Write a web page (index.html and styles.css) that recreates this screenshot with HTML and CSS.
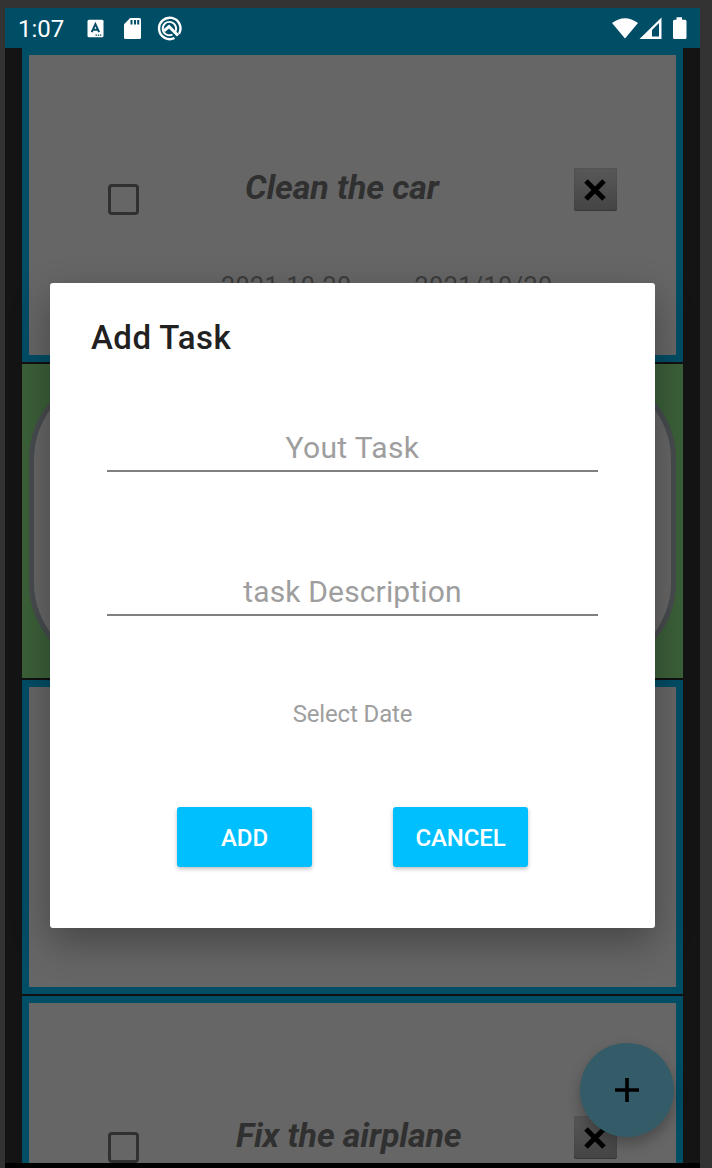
FILE: index.html
```html
<!DOCTYPE html>
<html lang="en">
<head>
<meta charset="utf-8">
<title>Add Task</title>
<link rel="stylesheet" href="styles.css">
</head>
<body>
<div class="phone">
  <header class="status">
    <span class="clock">1:07</span>
    <svg class="status-left" width="100" height="28" viewBox="0 0 100 28">
      <rect x="5.5" y="5.700" width="16" height="17.500" rx="1.5" fill="#fff"/>
      <path d="M9.7 18.2 13.4 10.2 17.1 18.2M11 15.700h4.8" fill="none" stroke="#004d66" stroke-width="2"/>
      <path d="M13.5 21.1h6" stroke="#004d66" stroke-width="1.2" stroke-dasharray="1.4 .8"/>
      <path d="M48.2 4H57.5Q59 4 59 5.500V23.500Q59 25 57.500 25H43.500Q42 25 42 23.500V10.300Z" fill="#fff"/>
      <path d="M49.500 6v4.500M53 6v4.500M56.200 6v4.500" stroke="#004d66" stroke-width="2"/>
      <path d="M97 19.800A10.700 10.700 0 1 0 92.500 24" fill="none" stroke="#fff" stroke-width="2.400"/>
      <path d="M92.800 18.500A6.700 6.700 0 1 0 90.500 20.500" fill="none" stroke="#fff" stroke-width="1.900"/>
      <path d="M82 16.800 87 12.500 96 21.500" fill="none" stroke="#fff" stroke-width="3"/>
    </svg>
    <svg class="status-right" width="78" height="28" viewBox="0 0 78 28">
      <path d="M0 9Q13-.500 26 9L13 24.500Z" fill="#fff"/>
      <path d="M27.500 25 49.500 3.500V25Z" fill="#fff"/>
      <path d="M40 16 47 9V22.500H40Z" fill="#004d66"/>
      <path d="M64.500 3.300h5.500v2.500h3q1.500 0 1.500 1.500V23.500Q74.500 25 73 25H62.500Q61 25 61 23.500V7.300Q61 5.800 62.500 5.800h2Z" fill="#fff"/>
    </svg>
  </header>

  <main class="list">
    <article class="card">
      <div class="row">
        <span class="check"></span>
        <h2 class="name name-car">Clean the car</h2>
        <button class="delete"><svg width="22" height="22" viewBox="0 0 22 22"><path d="M2 2 20 20M20 2 2 20"/></svg></button>
      </div>
      <div class="dates"><span>2021-10-20</span><span>2021/10/20</span></div>
    </article>
    <article class="card card-done"><div class="pill"></div></article>
    <article class="card"></article>
    <article class="card">
      <div class="row">
        <span class="check"></span>
        <h2 class="name name-plane">Fix the airplane</h2>
        <button class="delete"><svg width="22" height="22" viewBox="0 0 22 22"><path d="M2 2 20 20M20 2 2 20"/></svg></button>
      </div>
    </article>
  </main>
  <button class="fab"><svg width="24" height="24" viewBox="0 0 24 24"><path d="M12 0V24M0 12H24"/></svg></button>
  <footer class="nav"></footer>

  <section class="dialog">
    <h1 class="dialog-title">Add Task</h1>
    <div class="field"><span class="hint">Yout Task</span></div>
    <div class="field"><span class="hint hint-desc">task Description</span></div>
    <div class="date"><span class="date-text">Select Date</span></div>
    <div class="actions">
      <button class="action">ADD</button>
      <button class="action">CANCEL</button>
    </div>
  </section>
</div>
</body>
</html>
```
FILE: styles.css
```css
* { box-sizing: border-box; }
body { margin: 0; height: 1168px; padding: 8px 12px 0 5px; background: #333; font-family: Roboto, sans-serif; overflow: hidden; }
h1, h2 { margin: 0; }
button { border: 0; padding: 0; font-family: inherit; }
svg { display: block; }
.phone { position: relative; display: flex; flex-direction: column; width: 695px; height: 1160px; background: #141414; overflow: hidden; }
.status { display: flex; align-items: flex-start; height: 40px; flex: none; padding-left: 13px; background: #004d66; color: #fff; }
.clock { width: 64px; font-size: 24px; line-height: 42px; white-space: nowrap; }
.status-left { margin-top: 6px; }
.status-right { margin: 6px 10px 0 auto; }
.list { display: flex; flex-direction: column; gap: 2px; width: 661px; height: 1115px; margin-left: 17px; background: #101010; overflow: hidden; }
.card { flex: none; height: 314px; border: 7px solid #004d66; background: #666; }
.card-done { border-color: #3b6039; background: #3b6039; }
.pill { height: 100%; border: 5px solid #484c4e; border-radius: 88px; background: #666; }
.row { display: flex; align-items: flex-start; padding: 113px 59px 0 79px; }
.check { width: 31px; height: 31px; margin-top: 16px; border: 3px solid #303030; border-radius: 4px; }
.name { margin-top: -1px; font-size: 34px; line-height: 40px; font-weight: 700; font-style: italic; letter-spacing: -0.12px; color: #303030; white-space: nowrap; }
.name-car { margin-left: 106px; }
.name-plane { margin-left: 97px; }
.delete { display: grid; place-items: center; width: 43px; height: 43px; margin-left: auto; padding-right: 1px; background: linear-gradient(#585858, #444); border-radius: 3px; box-shadow: inset 0 -1px #363636, inset 0 0 1px #333; }
.delete path { stroke: #000; stroke-width: 5; }
.dates { display: flex; gap: 63px; margin-left: 192px; padding-top: 57px; font-size: 25px; line-height: 30px; letter-spacing: 0.43px; color: #3c3c3c; white-space: nowrap; }
.dates span + span { letter-spacing: 0.5px; }
.nav { height: 5px; background: #000; flex: none; }
.fab { position: absolute; left: 575px; top: 1035px; width: 94px; height: 94px; display: grid; place-items: center; border-radius: 50%; background: #345b68; box-shadow: 0 7px 14px rgba(0,0,0,.28); }
.fab path { stroke: #000; stroke-width: 3.6; }
.dialog { position: absolute; left: 45px; top: 275px; width: 605px; height: 645px; padding: 35px 57px 0; border-radius: 3px; background: #fff; box-shadow: 0 14px 38px rgba(0,0,0,.32); }
.dialog-title { margin-left: -16px; font-size: 33px; line-height: 40px; font-weight: 500; letter-spacing: 0.45px; color: #212121; white-space: nowrap; }
.field { height: 40px; margin-top: 74px; display: flex; justify-content: center; border-bottom: 2px solid #808080; line-height: 32px; }
.field + .field { margin-top: 104px; }
.hint { font-size: 30px; letter-spacing: 0.35px; color: #9e9e9e; white-space: nowrap; }
.hint-desc { letter-spacing: 0.15px; }
.date { display: flex; justify-content: center; margin-top: 83px; line-height: 30px; }
.date-text { font-size: 24px; letter-spacing: -0.15px; color: #9e9e9e; }
.actions { display: flex; justify-content: center; gap: 81px; margin-top: 78px; }
.action { width: 135px; height: 60px; padding-top: 2px; border-radius: 3px; background: #00bfff; color: #fff; font-size: 24px; font-weight: 500; letter-spacing: -0.15px; box-shadow: 0 2px 4px rgba(0,0,0,.25); }
```
